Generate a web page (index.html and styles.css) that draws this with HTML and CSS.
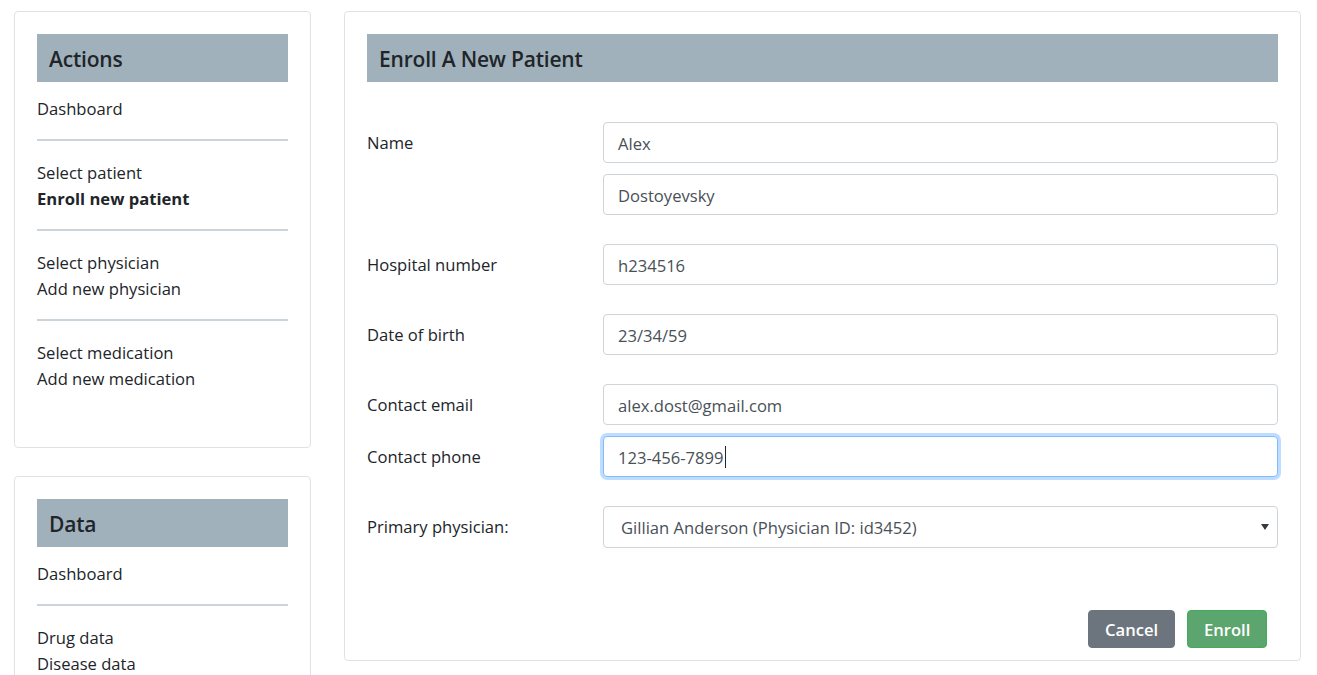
FILE: index.html
```html
<!DOCTYPE html>
<html lang="en">
<head>
<meta charset="utf-8">
<title>Enroll A New Patient</title>
<link rel="stylesheet" href="styles.css">
</head>
<body>
<div class="page">
  <aside class="sidebar">
    <section class="card side-card">
      <h2 class="card-title">Actions</h2>
      <ul class="nav-group first">
        <li><a href="#">Dashboard</a></li>
      </ul>
      <hr class="sep">
      <ul class="nav-group">
        <li><a href="#">Select patient</a></li>
        <li><a href="#" class="active">Enroll new patient</a></li>
      </ul>
      <hr class="sep">
      <ul class="nav-group">
        <li><a href="#">Select physician</a></li>
        <li><a href="#">Add new physician</a></li>
      </ul>
      <hr class="sep">
      <ul class="nav-group">
        <li><a href="#">Select medication</a></li>
        <li><a href="#">Add new medication</a></li>
      </ul>
    </section>
    <section class="card side-card">
      <h2 class="card-title">Data</h2>
      <ul class="nav-group first">
        <li><a href="#">Dashboard</a></li>
      </ul>
      <hr class="sep">
      <ul class="nav-group">
        <li><a href="#">Drug data</a></li>
        <li><a href="#">Disease data</a></li>
      </ul>
    </section>
  </aside>

  <main class="card main-card">
    <h2 class="card-title">Enroll A New Patient</h2>
    <form class="form">
      <div class="form-row">
        <label class="form-label">Name</label>
        <div class="field-stack">
          <input class="form-control" type="text" value="Alex">
          <input class="form-control" type="text" value="Dostoyevsky">
        </div>
      </div>
      <div class="form-row">
        <label class="form-label">Hospital number</label>
        <div class="field-stack">
          <input class="form-control" type="text" value="h234516">
        </div>
      </div>
      <div class="form-row">
        <label class="form-label">Date of birth</label>
        <div class="field-stack">
          <input class="form-control" type="text" value="23/34/59">
        </div>
      </div>
      <div class="form-row tight">
        <label class="form-label">Contact email</label>
        <div class="field-stack">
          <input class="form-control" type="text" value="alex.dost@gmail.com">
        </div>
      </div>
      <div class="form-row">
        <label class="form-label">Contact phone</label>
        <div class="field-stack">
          <div class="focus-wrap">
            <input class="form-control focused" type="text" value="123-456-7899">
            <span class="caret"></span>
          </div>
        </div>
      </div>
      <div class="form-row last">
        <label class="form-label">Primary physician:</label>
        <div class="field-stack">
          <div class="select-wrap">
            <select class="form-select">
              <option>Gillian Anderson (Physician ID: id3452)</option>
            </select>
            <svg class="select-arrow" width="8" height="6" viewBox="0 0 8 6"><path d="M0 0 L8 0 L4 6 Z" fill="#343a40"/></svg>
          </div>
        </div>
      </div>
      <div class="actions">
        <button type="button" class="btn btn-secondary">Cancel</button>
        <button type="button" class="btn btn-success">Enroll</button>
      </div>
    </form>
  </main>
</div>
</body>
</html>
```

FILE: styles.css
```css
html {
  overflow: hidden;
}
body {
  margin: 0;
  background: #fff;
  color: #212529;
  font-family: "Open Sans", "Noto Sans", sans-serif;
  font-size: 16.6px;
  line-height: 26px;
}
.page {
  display: flex;
  align-items: flex-start;
  gap: 33px;
  padding: 11px 16px 0 14px;
}
.sidebar {
  width: 297px;
  flex: none;
  display: flex;
  flex-direction: column;
  gap: 28px;
}
.card {
  box-sizing: border-box;
  border: 1px solid #dfe2e5;
  border-radius: 4px;
  padding: 22px;
  background: #fff;
}
.side-card {
  padding-bottom: 56px;
}
.card-title {
  margin: 0;
  height: 48px;
  box-sizing: border-box;
  display: flex;
  align-items: center;
  padding: 2px 12px 0;
  background: #a0b1bc;
  color: #212529;
  font-size: 21px;
  font-weight: 600;
  letter-spacing: -0.2px;
}
.nav-group {
  list-style: none;
  margin: 0;
  padding: 0;
}
.nav-group li {
  padding-top: 1px;
  margin-bottom: -1px;
}
.nav-group.first {
  margin-top: 13px;
}
.nav-group a {
  color: #212529;
  text-decoration: none;
}
.nav-group a.active {
  font-weight: 700;
}
.sep {
  margin: 18px 0;
  border: 0;
  height: 2px;
  background: #cbd3db;
}
.main-card {
  flex: 1;
  min-width: 0;
  padding-bottom: 12px;
}
.form {
  margin-top: 40px;
}
.form-row {
  display: grid;
  grid-template-columns: 236px 1fr;
  margin-bottom: 29px;
}
.form-row.tight {
  margin-bottom: 11px;
}
.form-row.last {
  margin-bottom: 0;
}
.form-label {
  height: 41px;
  display: flex;
  align-items: center;
  padding-top: 1px;
  box-sizing: border-box;
  color: #212529;
}
.field-stack {
  display: flex;
  flex-direction: column;
  gap: 11px;
}
.form-control,
.form-select {
  box-sizing: border-box;
  width: 100%;
  height: 41px;
  margin: 0;
  padding: 1px 14px 0;
  border: 1px solid #ced4da;
  border-radius: 4px;
  background: #fff;
  color: #495057;
  font-family: inherit;
  font-size: 16.6px;
  outline: none;
}
.focus-wrap {
  position: relative;
}
.form-control.focused {
  border-color: #80bdff;
  box-shadow: 0 0 0 3px rgba(0, 123, 255, 0.25);
}
.caret {
  position: absolute;
  left: 122px;
  top: 10px;
  width: 1px;
  height: 22px;
  background: #212529;
}
.select-wrap {
  position: relative;
}
.form-select {
  height: 42px;
  padding-left: 17px;
  appearance: none;
  -webkit-appearance: none;
}
.select-arrow {
  position: absolute;
  right: 9px;
  top: 18px;
}
.actions {
  display: flex;
  justify-content: flex-end;
  gap: 12px;
  padding-right: 11px;
  margin-top: 62px;
}
.btn {
  box-sizing: border-box;
  height: 38px;
  padding: 1px 16px 0;
  border-radius: 4px;
  border: 1px solid transparent;
  font-family: inherit;
  font-size: 16.6px;
  font-weight: 600;
  color: #fff;
  cursor: pointer;
}
.btn-secondary {
  width: 87px;
  background: #6c757d;
  border-color: #6c757d;
}
.btn-success {
  width: 80px;
  background: #5ca56f;
  border-color: #3fae58;
}
```
